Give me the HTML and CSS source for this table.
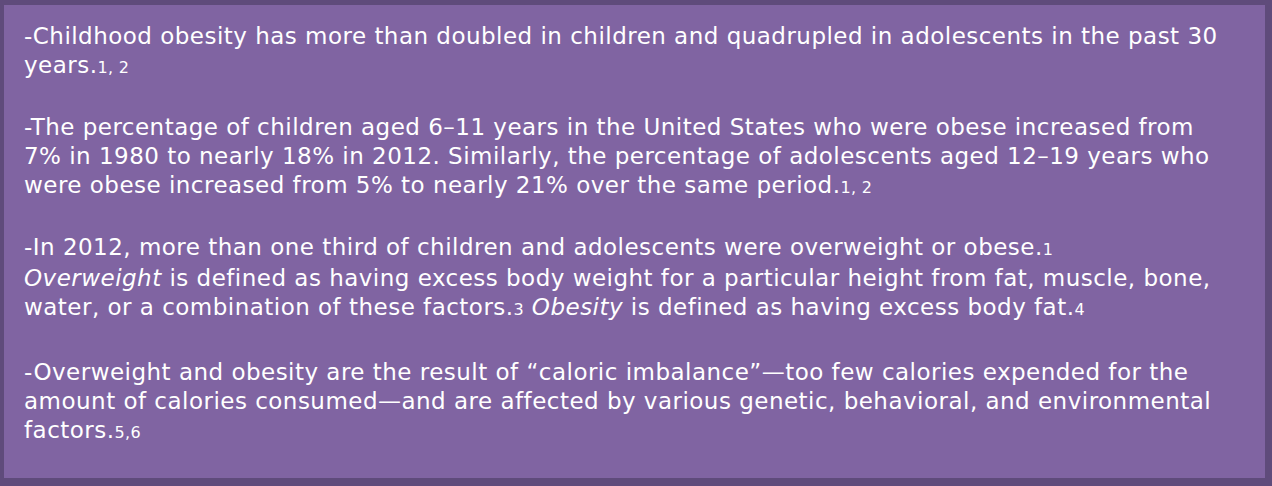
FILE: index.html
```html
<!DOCTYPE html>
<html>
<head>
<meta charset="utf-8">
<link rel="stylesheet" href="styles.css">
</head>
<body>
<div class="panel">
  <p>-Childhood obesity has more than doubled in children and quadrupled in adolescents in the past 30 years.<span class="ref">1, 2</span></p>
  <p>-The percentage of children aged 6–11 years in the United States who were obese increased from 7% in 1980 to nearly 18% in 2012. Similarly, the percentage of adolescents aged 12–19 years who were obese increased from 5% to nearly 21% over the same period.<span class="ref">1, 2</span></p>
  <p>-In 2012, more than one third of children and adolescents were overweight or obese.<span class="ref">1</span><br><em>Overweight</em> is defined as having excess body weight for a particular height from fat, muscle, bone, water, or a combination of these factors.<span class="ref">3</span> <em>Obesity</em> is defined as having excess body fat.<span class="ref">4</span></p>
  <p class="wide">-Overweight and obesity are the result of “caloric imbalance”—too few calories expended for the amount of calories consumed—and are affected by various genetic, behavioral, and environmental factors.<span class="ref">5,6</span></p>
</div>
</body>
</html>
```

FILE: styles.css
```css
html, body {
  margin: 0;
  padding: 0;
  background: #5f4b7b;
}
.panel {
  box-sizing: border-box;
  width: 1272px;
  height: 486px;
  background: #8064a2;
  border-style: solid;
  border-color: #5f4b7b;
  border-width: 5px 7px 8px 4px;
  padding: 17px 35px 0 20px;
  font-family: "DejaVu Sans", Verdana, sans-serif;
  font-size: 23px;
  letter-spacing: 0.48px;
  line-height: 29px;
  color: #ffffff;
}
.panel p {
  margin: 0 0 31px 0;
}
.panel p.wide {
  margin-top: 34px;
}
.ref {
  font-size: 16px;
  letter-spacing: 0.3px;
}
```
